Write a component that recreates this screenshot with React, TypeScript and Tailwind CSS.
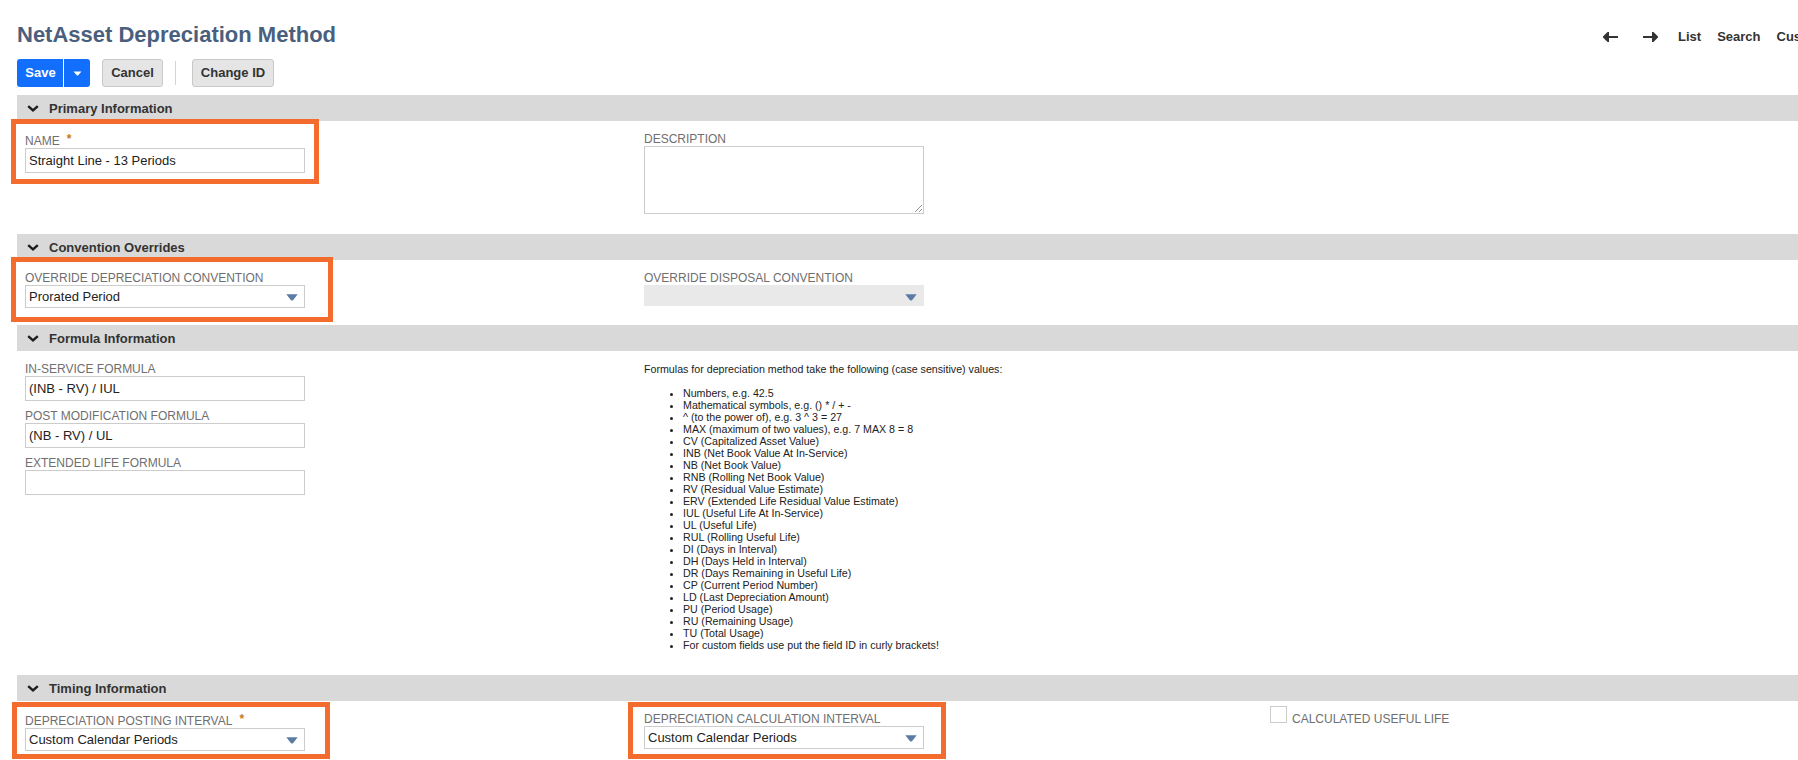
import React from "react";

const formulaValues = [
  "Numbers, e.g. 42.5",
  "Mathematical symbols, e.g. () * / + -",
  "^ (to the power of), e.g. 3 ^ 3 = 27",
  "MAX (maximum of two values), e.g. 7 MAX 8 = 8",
  "CV (Capitalized Asset Value)",
  "INB (Net Book Value At In-Service)",
  "NB (Net Book Value)",
  "RNB (Rolling Net Book Value)",
  "RV (Residual Value Estimate)",
  "ERV (Extended Life Residual Value Estimate)",
  "IUL (Useful Life At In-Service)",
  "UL (Useful Life)",
  "RUL (Rolling Useful Life)",
  "DI (Days in Interval)",
  "DH (Days Held in Interval)",
  "DR (Days Remaining in Useful Life)",
  "CP (Current Period Number)",
  "LD (Last Depreciation Amount)",
  "PU (Period Usage)",
  "RU (Remaining Usage)",
  "TU (Total Usage)",
  "For custom fields use put the field ID in curly brackets!",
];

function SectionBar({ title }: { title: string }) {
  return (
    <div className="h-[26px] ml-[17px] bg-[#d9d9d9] flex items-center pl-[10px] pt-px shrink-0">
      <svg width="12" height="7" viewBox="0 0 12 7" className="mr-[10px]">
        <path d="M1.2 1.2 L6 5.4 L10.8 1.2" fill="none" stroke="#1c1c1c" strokeWidth="2.4" />
      </svg>
      <span className="text-[13px] font-bold text-[#333] leading-none">{title}</span>
    </div>
  );
}

function Label({ text, required }: { text: string; required?: boolean }) {
  return (
    <div className="text-[12px] leading-[14px] text-[#6f6f6f] whitespace-nowrap">
      {text}
      {required && <span className="text-[#c77a12] font-bold ml-[7px] relative -top-[2px]">*</span>}
    </div>
  );
}

function TextBox({ value }: { value?: string }) {
  return (
    <div className="w-[280px] h-[25px] border border-[#cccccc] bg-white flex items-center pl-[3px] text-[13px] text-[#222]">
      {value}
    </div>
  );
}

function SelectBox({ value, disabled }: { value?: string; disabled?: boolean }) {
  return (
    <div
      className={
        disabled
          ? "relative w-[280px] h-[21px] bg-[#e9e9e9]"
          : "relative w-[280px] h-[23px] border border-[#cccccc] bg-white flex items-center pl-[3px] text-[13px] text-[#222]"
      }
    >
      {value}
      <svg
        width="12"
        height="7"
        viewBox="0 0 12 7"
        className={disabled ? "absolute right-[7px] top-[9px]" : "absolute right-[6px] top-[8px]"}
      >
        <path d="M0.3 0.3 H11.7 L7 6.2 Q6 7 5 6.2 Z" fill="#5b7ba5" />
      </svg>
    </div>
  );
}

// orange annotation frame laid over a field
function Highlight({ className }: { className: string }) {
  return <div className={"absolute border-[5px] border-[#f36c2e] pointer-events-none " + className} />;
}

export default function App() {
  return (
    <div
      className="w-[1798px] h-[760px] overflow-hidden bg-white flex flex-col relative"
      style={{ fontFamily: '"Liberation Sans", Arial, sans-serif' }}
    >
      {/* Title row */}
      <div className="h-[59px] shrink-0 flex pl-[17px]">
        <h1 className="text-[22px] font-bold text-[#4a5f7d] leading-[25px] mt-[22px]">NetAsset Depreciation Method</h1>
        <div className="ml-auto flex items-center h-[16px] mt-[29px] text-[13px] font-bold text-[#333] shrink-0 w-[195px] whitespace-nowrap">
          <svg width="15" height="10" viewBox="0 0 15 10" className="shrink-0">
            <path d="M15 5 H4 M5 1 L1 5 L5 9 Z" stroke="#333" strokeWidth="2" fill="#333" />
          </svg>
          <svg width="15" height="10" viewBox="0 0 15 10" className="ml-[25px] shrink-0">
            <path d="M0 5 H11 M10 1 L14 5 L10 9 Z" stroke="#333" strokeWidth="2" fill="#333" />
          </svg>
          <span className="ml-[20px]">List</span>
          <span className="ml-[16px]">Search</span>
          <span className="ml-[16px]">Customize</span>
        </div>
      </div>

      {/* Buttons */}
      <div className="h-[36px] shrink-0 flex items-start pl-[17px] text-[13px] font-bold">
        <div className="h-[28px] w-[73px] rounded-[3px] bg-[#126efc] text-white flex">
          <span className="w-[47px] pl-px flex items-center justify-center border-r border-white">Save</span>
          <span className="flex-1 flex items-center justify-center">
            <svg width="9" height="5" viewBox="0 0 9 5">
              <path d="M0.5 0.5 H8.5 L5 4.5 H4 Z" fill="#fff" />
            </svg>
          </span>
        </div>
        <button className="ml-[12px] h-[28px] w-[61px] rounded-[3px] border border-[#c9c9c9] bg-[#e5e5e5] text-[#333]">Cancel</button>
        <div className="ml-[12px] mt-[2px] h-[24px] w-px bg-[#d5d5d5]" />
        <button className="ml-[16px] h-[28px] w-[82px] rounded-[3px] border border-[#c9c9c9] bg-[#e5e5e5] text-[#333]">Change ID</button>
      </div>

      {/* Primary Information */}
      <SectionBar title="Primary Information" />
      <div className="h-[113px] shrink-0 pl-[25px] flex">
        <div className="relative w-[619px] pt-[13px]">
          <Highlight className="-left-[14px] top-[-2px] w-[308px] h-[65px]" />
          <Label text="NAME" required />
          <TextBox value="Straight Line - 13 Periods" />
        </div>
        <div className="pt-[11px]">
          <Label text="DESCRIPTION" />
          <div className="relative w-[280px] h-[68px] border border-[#cccccc]">
            <svg width="9" height="9" viewBox="0 0 9 9" className="absolute right-0 bottom-0">
              <path d="M1 8 L8 1 M5 8 L8 5" stroke="#777" strokeWidth="0.8" />
            </svg>
          </div>
        </div>
      </div>

      {/* Convention Overrides */}
      <SectionBar title="Convention Overrides" />
      <div className="h-[65px] shrink-0 pl-[25px] flex">
        <div className="relative w-[619px] pt-[11px]">
          <Highlight className="-left-[14px] top-[-3px] w-[322px] h-[65px]" />
          <Label text="OVERRIDE DEPRECIATION CONVENTION" />
          <SelectBox value="Prorated Period" />
        </div>
        <div className="pt-[11px]">
          <Label text="OVERRIDE DISPOSAL CONVENTION" />
          <SelectBox disabled />
        </div>
      </div>

      {/* Formula Information */}
      <SectionBar title="Formula Information" />
      <div className="h-[324px] shrink-0 pl-[25px] flex">
        <div className="w-[619px] pt-[11px] flex flex-col gap-[8px]">
          <div>
            <Label text="IN-SERVICE FORMULA" />
            <TextBox value="(INB - RV) / IUL" />
          </div>
          <div>
            <Label text="POST MODIFICATION FORMULA" />
            <TextBox value="(NB - RV) / UL" />
          </div>
          <div>
            <Label text="EXTENDED LIFE FORMULA" />
            <TextBox />
          </div>
        </div>
        <div className="pt-[12px] text-[10.66px] leading-[12px] text-[#222]">
          <p>Formulas for depreciation method take the following (case sensitive) values:</p>
          <ul className="mt-[12px] pl-[39px] list-disc">
            {formulaValues.map((v) => (
              <li key={v}>{v}</li>
            ))}
          </ul>
        </div>
      </div>

      {/* Timing Information */}
      <SectionBar title="Timing Information" />
      <div className="flex-1 pl-[25px] flex">
        <div className="relative w-[619px] pt-[13px]">
          <Highlight className="-left-[13px] top-[1px] w-[318px] h-[57px]" />
          <Label text="DEPRECIATION POSTING INTERVAL" required />
          <SelectBox value="Custom Calendar Periods" />
        </div>
        <div className="relative w-[626px] pt-[11px]">
          <Highlight className="-left-[16px] top-[1px] w-[318px] h-[57px]" />
          <Label text="DEPRECIATION CALCULATION INTERVAL" />
          <SelectBox value="Custom Calendar Periods" />
        </div>
        <div className="flex items-start pt-[5px]">
          <div className="w-[17px] h-[17px] border border-[#cccccc]" />
          <div className="ml-[5px] mt-[6px]">
            <Label text="CALCULATED USEFUL LIFE" />
          </div>
        </div>
      </div>
    </div>
  );
}
